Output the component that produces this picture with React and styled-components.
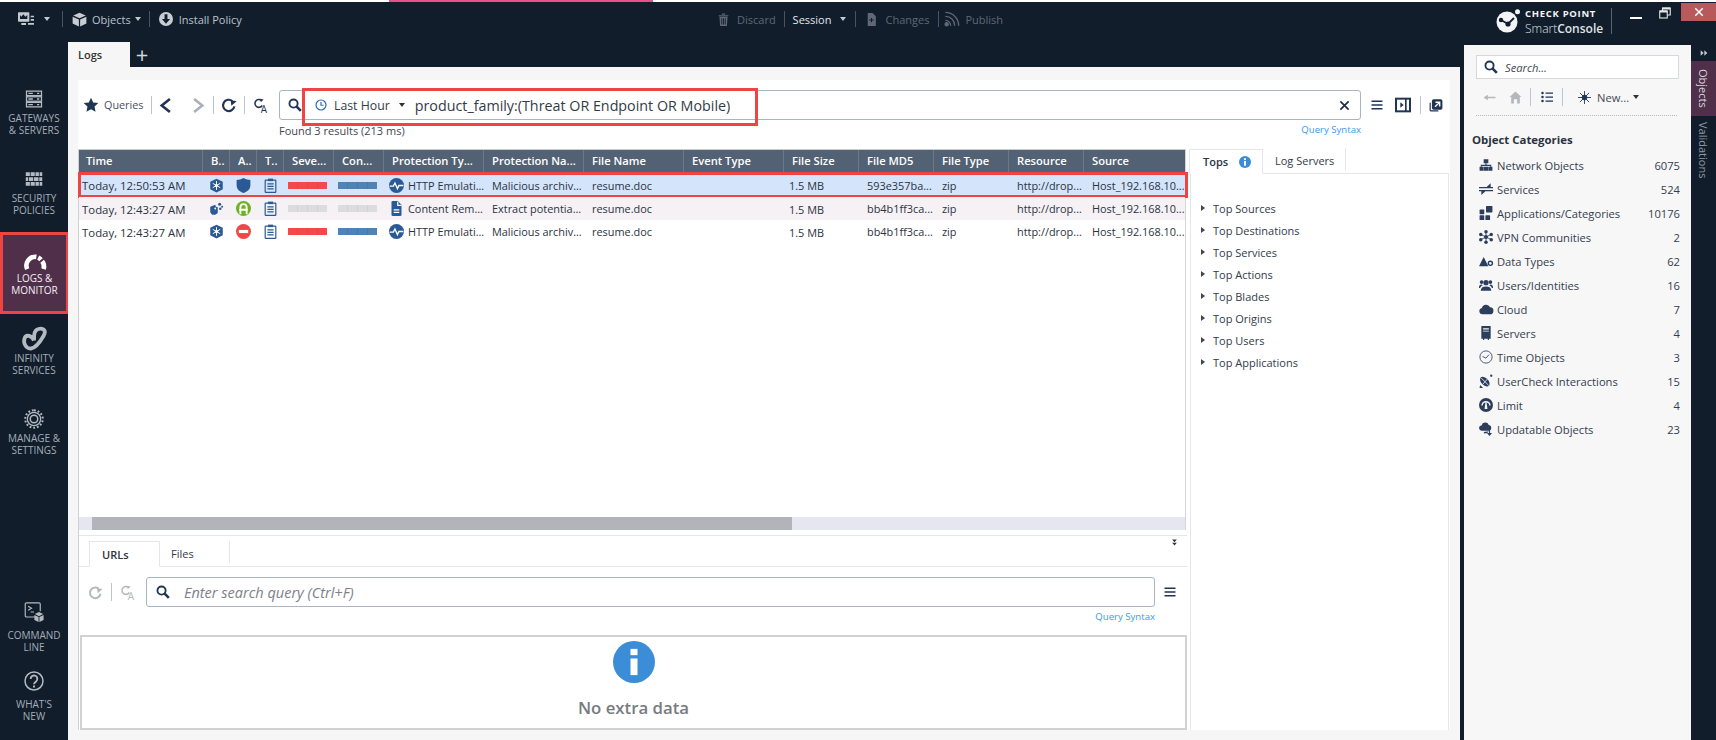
import React from 'react'
import styled, { createGlobalStyle } from 'styled-components'

const GlobalStyle = createGlobalStyle`
  html, body { margin: 0; padding: 0; background: #111d2b; }
  body { font-family: "Open Sans", "Noto Sans", sans-serif; font-size: 11px; }
  * { box-sizing: border-box; }
`

const navy = '#2a5a96'
const ink = '#1f3553'

// icon drawings, all on a 24 box
const drawings = {
  star: <path fill="currentColor" d="M12 1l3.3 7.2 7.7.9-5.7 5.3 1.5 7.6L12 18.2 5.2 22l1.5-7.6L1 9.1l7.7-.9z" />,
  chevL: <path fill="none" stroke="currentColor" strokeWidth="4.2" d="M19 1.500L6 12l13 10.500" />,
  chevR: <path fill="none" stroke="currentColor" strokeWidth="4.2" d="M5 1.500L18 12 5 22.500" />,
  refresh: (
    <g>
      <path fill="none" stroke="currentColor" strokeWidth="3.2" d="M20 14a8.5 8.5 0 1 1-3-8" />
      <path fill="currentColor" d="M23.5 6.5L15.5 13l-1-8z" />
    </g>
  ),
  queryA: (
    <g>
      <path fill="none" stroke="currentColor" strokeWidth="2.2" d="M13 12a5.5 5.5 0 1 1-1-7" />
      <path fill="currentColor" d="M15 3.5l-4 4-1-5z" />
      <text x="11" y="23" fontSize="14" fontFamily="Open Sans" fill="currentColor">A</text>
    </g>
  ),
  search: (
    <g fill="none" stroke="currentColor">
      <circle cx="9.5" cy="9.5" r="7" strokeWidth="3.2" />
      <path strokeWidth="4.4" d="M14.5 14.5L22 22" />
    </g>
  ),
  clock: (
    <g fill="none" stroke="currentColor" strokeWidth="2.4">
      <circle cx="12" cy="12" r="10" />
      <path d="M12 6v6.5h5" />
    </g>
  ),
  close: <path fill="none" stroke="currentColor" strokeWidth="3.6" d="M3 3l18 18M21 3L3 21" />,
  menu: <path fill="none" stroke="currentColor" strokeWidth="3" d="M1 4.5h22M1 12h22M1 19.5h22" />,
  dock: (
    <g>
      <rect x="1.5" y="2.5" width="21" height="19" fill="none" stroke="currentColor" strokeWidth="3" />
      <path fill="currentColor" d="M15 3h2.5v18H15zM8 8l5 4-5 4z" />
    </g>
  ),
  popout: (
    <g fill="currentColor">
      <path d="M8 2h12a3 3 0 0 1 3 3v12a3 3 0 0 1-3 3H8a3 3 0 0 1-3-3V5a3 3 0 0 1 3-3zm3 4v2.5h4.5L9.5 14l1.8 1.8L17 10v4.5h2.5V6z" />
      <path d="M1 8h2v12a1 1 0 0 0 1 1h12v2H3a2 2 0 0 1-2-2z" />
    </g>
  ),
  info: (
    <g>
      <circle cx="12" cy="12" r="12" fill="#3a8dd6" />
      <rect x="10" y="4.5" width="4" height="3.6" fill="#fff" />
      <rect x="10" y="10" width="4" height="9.5" fill="#fff" />
    </g>
  ),
  hexSnow: (
    <g>
      <path fill={navy} d="M12 1l10 5v12l-10 5-10-5V6z" />
      <path stroke="#fff" strokeWidth="1.6" d="M12 5v14M6 8.500l12 7M18 8.500l-12 7" />
      <circle cx="12" cy="12" r="2.6" fill="#fff" />
    </g>
  ),
  scatter: (
    <g fill={navy}>
      <path d="M2 9l8-3 1 3 3 1v9l-4 3H5L2 18z" />
      <circle cx="17" cy="5" r="2.4" />
      <circle cx="21" cy="9" r="1.6" />
      <circle cx="18" cy="12.5" r="2" />
      <circle cx="10" cy="12" r="1.5" fill="#fff" />
    </g>
  ),
  shield: <path fill={navy} d="M12 0C9 2 4 3 1 3v9c0 6 5 10 11 12 6-2 11-6 11-12V3c-3 0-8-1-11-3z" />,
  road: (
    <g>
      <circle cx="12" cy="12" r="12" fill="#6bb31f" />
      <path fill="none" stroke="#fff" strokeWidth="3" d="M7 21V10a5 5 0 0 1 10 0v11M5 14h14" />
    </g>
  ),
  block: (
    <g>
      <circle cx="12" cy="12" r="12" fill="#ef4747" />
      <rect x="4.5" y="9.5" width="15" height="5" fill="#fff" />
    </g>
  ),
  clipboard: (
    <g fill="none" stroke={navy} strokeWidth="1.9">
      <rect x="3.500" y="3.500" width="17" height="19.5" rx="1" />
      <path d="M7 9.5h10M7 13.5h10M7 17.5h10" />
      <rect x="8" y="1" width="8" height="4" fill={navy} stroke="none" />
    </g>
  ),
  pulse: (
    <g>
      <circle cx="12" cy="12" r="12" fill={navy} />
      <path fill="none" stroke="#fff" strokeWidth="2.2" d="M1 13h6l2.5-5 4 9 2.5-5h7" />
    </g>
  ),
  doc: (
    <g>
      <path fill={navy} d="M6 0h8l6 6v16a2 2 0 0 1-2 2H6a2 2 0 0 1-2-2V2a2 2 0 0 1 2-2z" />
      <path stroke="#fff" strokeWidth="2" d="M7.500 14h9M7.500 18h9M14 1v6h6" fill="none" />
    </g>
  ),
  // sidebar
  servers: (
    <g fill="none" stroke="currentColor" strokeWidth="1.7">
      <rect x="2" y="1.5" width="20" height="6" />
      <rect x="2" y="9" width="20" height="6" />
      <rect x="2" y="16.5" width="20" height="6" />
      <path d="M4.5 4.5h6M4.5 12h6M4.5 19.5h6M16 4.5h3M16 12h3M16 19.5h3" />
    </g>
  ),
  wall: (
    <g fill="currentColor">
      <path d="M1 3h5.5v5H1zM7.5 3h5.5v5H7.500zM14 3h4.500v5H14zM19.500 3H23v5h-3.500z" />
      <path d="M1 9.500h3v5H1zM5 9.500h6v5H5zM12 9.500h6v5h-6zM19 9.500h4v5h-4z" />
      <path d="M1 16h5.500v5H1zM7.500 16h5.500v5H7.500zM14 16h4.500v5H14zM19.500 16H23v5h-3.500z" />
    </g>
  ),
  gauge: (
    <g fill="none" stroke="#fff" strokeWidth="5">
      <path d="M3.500 23A9.500 9.500 0 0 1 13.500 9.700" />
      <path d="M15.500 10.300A9.500 9.500 0 0 1 18.500 12.800" />
      <path d="M19.800 14.500A9.500 9.500 0 0 1 21.500 23" />
    </g>
  ),
  infinity: (
    <path fill="none" stroke="currentColor" strokeWidth="3.8" d="M12 13.500C10 8.500 4 7 2.500 11.500S4 22 9 21.500 18 15 21.500 9 21 1 16.500 2 12 8 12 13.500" />
  ),
  gear: (
    <g fill="none" stroke="currentColor">
      <circle cx="12" cy="12" r="8" strokeWidth="1.500" />
      <circle cx="12" cy="12" r="4.500" strokeWidth="1.800" />
      <path strokeWidth="2.400" strokeDasharray="2.200 2.300" d="M12 1.500a10.500 10.500 0 1 1 0 21 10.500 10.500 0 1 1 0-21" />
    </g>
  ),
  terminal: (
    <g>
      <path fill="none" stroke="currentColor" strokeWidth="1.400" d="M14 18H3a1.500 1.500 0 0 1-1.500-1.500v-14A1.500 1.500 0 0 1 3 1h15a1.500 1.500 0 0 1 1.500 1.500V11" />
      <path fill="none" stroke="currentColor" strokeWidth="1.400" d="M5 5l4 2.500L5 10M8 12h4" />
      <path fill="currentColor" d="M18 12l5 2.500-5 2.500-5-2.500zM12.500 15.500l5 2.500v6l-5-2.500zM23.500 15.500l-5 2.500v6l5-2.500z" />
    </g>
  ),
  help: (
    <g fill="none" stroke="currentColor" strokeWidth="1.800">
      <circle cx="12" cy="12" r="10.800" />
      <path strokeWidth="2.200" d="M8 9.500a4 4 0 1 1 6.500 3c-1.500 1.200-2.500 1.800-2.500 3.500" />
      <path strokeWidth="2.400" d="M12 17.500v2.400" />
    </g>
  ),
  // top bar
  crown: (
    <g fill="currentColor">
      <path d="M1 2h15a1 1 0 0 1 1 1v12a1 1 0 0 1-1 1H1a1 1 0 0 1-1-1V3a1 1 0 0 1 1-1zm2 10h11V6l-3 2.500-3-3.500-3 3.500L3 6z" fillRule="evenodd" />
      <path d="M5 18h7v3H5zM19 7h5v2.500h-5zM19 12h5v2.500h-5zM15 18h9v2.500h-9z" />
    </g>
  ),
  cube: (
    <g fill="currentColor">
      <path d="M12 1l10 4.500-10 4.500L2 5.500z" />
      <path d="M1 7.500l10 4.500v11L1 18.500zM23 7.500L13 12v11l10-4.500z" />
    </g>
  ),
  install: (
    <g>
      <circle cx="12" cy="12" r="12" fill="currentColor" />
      <path fill="#111d2b" d="M9.500 4h5v8H19l-7 8-7-8h4.500z" />
    </g>
  ),
  trash: (
    <g fill="currentColor">
      <path d="M3 4h18v2H3zM9 1h6v2H9zM4.500 7h15l-1.200 17H5.700zm3.500 2.500V21h1.600V9.500zm3.200 0V21h1.600V9.500zm3.200 0V21H16V9.500z" fillRule="evenodd" />
    </g>
  ),
  changes: (
    <g fill="currentColor">
      <path d="M5 0h9l6 6v18H5zm6 9v3H8v2h3v3h2v-3h3v-2h-3V9z" fillRule="evenodd" />
    </g>
  ),
  rss: (
    <g fill="none" stroke="currentColor" strokeWidth="2">
      <path d="M2 2c11 0 20 9 20 20M2 8c8 0 14 6 14 14M2 14c4.500 0 8 3.500 8 8" />
      <circle cx="4" cy="20" r="2.400" fill="currentColor" />
    </g>
  ),
  restore: (
    <g fill="none" stroke="currentColor" strokeWidth="2.200">
      <rect x="1.500" y="8" width="15" height="14" />
      <path d="M7 8V2h15.500v14H16.500" />
      <path strokeWidth="3.600" d="M1.500 9h15M7 3h15.500" />
    </g>
  ),
  dblDown: <path fill="currentColor" d="M4 2h16l-8 9zM4 13h16l-8 9z" />,
  dblRight: <path fill="currentColor" d="M2 4v16l9-8zM13 4v16l9-8z" />,
  // object panel
  home: (
    <g fill="currentColor">
      <path d="M12 1l11 10h-3v12h-5v-8H9v8H4V11H1z" />
    </g>
  ),
  back: <path fill="currentColor" d="M1 12l8-5v3.500h14v3H9V17z" />,
  list: (
    <g fill="currentColor">
      <circle cx="3" cy="4" r="2.500" />
      <circle cx="3" cy="12" r="2.500" />
      <circle cx="3" cy="20" r="2.500" />
      <path d="M9 3h15v2.400H9zM9 11h15v2.400H9zM9 19h15v2.400H9z" />
    </g>
  ),
  burst: (
    <g stroke="currentColor" strokeWidth="1.600">
      <path d="M12 0v24M0 12h24M3.500 3.500l17 17M20.500 3.500l-17 17" />
      <circle cx="12" cy="12" r="4.500" fill="currentColor" />
    </g>
  ),
  tree: (
    <g fill="currentColor">
      <path d="M8 2h8v7H8zM1 15h7v7H1zM16 15h7v7h-7zM8.500 15h7v7h-7z" />
      <path d="M11 9h2v2.500h8V15h-2v-1.500H5V15H3v-3.500h8z" />
    </g>
  ),
  swap: (
    <g fill="currentColor">
      <path d="M0 8.500h24v2.200H0zM13 8.500l7-6.500v6.500zM0 13.500h24v2.200H0zM4 15.700v6.500l7-6.500z" />
    </g>
  ),
  apps: (
    <g fill="currentColor">
      <rect x="1" y="6" width="8" height="8" rx="1" />
      <rect x="1" y="16" width="8" height="8" rx="1" />
      <rect x="11" y="16" width="8" height="8" rx="1" />
      <rect x="12" y="0" width="11" height="11" rx="1" />
    </g>
  ),
  vpn: (
    <g fill="currentColor">
      <circle cx="12" cy="3" r="3" />
      <circle cx="12" cy="21" r="3" />
      <circle cx="3" cy="7.500" r="3" />
      <circle cx="21" cy="7.500" r="3" />
      <circle cx="3" cy="16.500" r="3" />
      <circle cx="21" cy="16.500" r="3" />
      <circle cx="12" cy="12" r="3.500" />
      <path stroke="currentColor" strokeWidth="1.400" d="M12 3v18M3 7.500l18 9M21 7.500l-18 9" />
    </g>
  ),
  dataType: (
    <g>
      <path fill="currentColor" d="M0 21L8 5l8 16z" />
      <circle cx="19.500" cy="16" r="3.500" fill="none" stroke="currentColor" strokeWidth="2.400" />
    </g>
  ),
  users: (
    <g fill="currentColor">
      <circle cx="12" cy="8" r="4.500" />
      <path d="M3 22c0-5 3-7.500 9-7.500s9 2.500 9 7.500z" />
      <circle cx="4.500" cy="7" r="3.200" />
      <circle cx="19.500" cy="7" r="3.200" />
      <path d="M0 16c0-3 1.500-5 4.500-5l2 1.500C4 14 2.500 15 2 17H0zM24 16c0-3-1.500-5-4.500-5l-2 1.500c2.500 1.500 4 2.500 4.500 4.500h2z" />
    </g>
  ),
  cloud: <path fill="currentColor" d="M6 21a5.500 5.500 0 0 1-1-10.900A7.500 7.500 0 0 1 19 9a6 6 0 0 1-.5 12z" />,
  server: (
    <g fill="currentColor">
      <path d="M4 0h16v22h-3v2h-2v-2H9v2H7v-2H4zm3 4v2h10V4zm0 4v1.500h10V8z" fillRule="evenodd" />
    </g>
  ),
  timeObj: (
    <g fill="none" stroke="currentColor" strokeWidth="1.400">
      <circle cx="12" cy="12" r="10.500" />
      <path d="M6 11l6 3 5-6" />
    </g>
  ),
  dish: (
    <g fill="currentColor">
      <ellipse cx="10" cy="13" rx="6" ry="10" transform="rotate(-45 10 13)" />
      <path stroke="#f7f7f7" strokeWidth="1.400" d="M4 7l13 13M15 8L7 17" />
      <circle cx="21" cy="3" r="2" />
      <path d="M2 19l5 5H1z" />
    </g>
  ),
  limit: (
    <g>
      <circle cx="12" cy="12" r="12" fill="currentColor" />
      <path fill="#f7f7f7" d="M11 8h2l1.500 11h-5zM4 13a8 8 0 0 1 16 0h-2.500a5.500 5.500 0 0 0-11 0z" />
    </g>
  ),
  update: (
    <g fill="currentColor">
      <path d="M5 15a4.500 4.500 0 0 1-.6-9 6.500 6.500 0 0 1 12.400-1 5 5 0 0 1 .6 9.800L16 15z" />
      <path d="M17 13h2v6h3.500L18 24l-4.500-5H17zM8 17l9-1-3 3-5 .5z" />
    </g>
  ),
  logo: (
    <g>
      <circle cx="11" cy="13" r="10.500" fill="#f2f4f6" />
      <path stroke="#111d2b" strokeWidth="1.800" d="M5 11l7 4 6-6" fill="none" />
      <circle cx="5" cy="11" r="2.200" fill="#111d2b" />
      <circle cx="12" cy="15" r="2.600" fill="#111d2b" />
      <circle cx="21.500" cy="2.800" r="2.500" fill="#f2f4f6" />
    </g>
  ),
}

const Glyph = styled.svg`
  display: block;
  flex: none;
  overflow: visible;
  color: ${p => p.$c || 'currentColor'};
  margin-left: ${p => p.$ml || 0}px;
`

const Ic = ({ name, w = 14, h, c, ml }) => (
  <Glyph width={w} height={h || w} viewBox="0 0 24 24" preserveAspectRatio="xMidYMid meet" $c={c} $ml={ml}>
    {drawings[name]}
  </Glyph>
)

const Page = styled.div`
  width: 1716px;
  height: 740px;
  display: flex;
  flex-direction: column;
  overflow: hidden;
  background: #111d2b;
`

const Strip = styled.div`
  height: 2px;
  flex: none;
  background: linear-gradient(to right, #fff 389px, #e8528c 389px, #e8528c 653px, #fff 653px);
`

const TopBar = styled.header`
  height: 40px;
  flex: none;
  display: flex;
  color: #c3c9d0;
`

const BarGroup = styled.div`
  display: flex;
  align-items: center;
  height: 34px;
  padding-left: ${p => p.$pad || 0}px;
  width: ${p => (p.$w ? `${p.$w}px` : 'auto')};
`

const BarLabel = styled.span`
  font-size: 11px;
  white-space: nowrap;
  margin-left: ${p => p.$ml || 0}px;
  color: ${p => (p.$off ? '#5f6874' : p.$bright ? '#e3e6ea' : '#bcc3cb')};
`

const Caret = styled.i`
  flex: none;
  width: 0;
  height: 0;
  margin-left: ${p => p.$ml || 0}px;
  border-left: 3.5px solid transparent;
  border-right: 3.5px solid transparent;
  border-top: 4px solid ${p => p.$c || '#c3c9d0'};
`

const BarSep = styled.i`
  flex: none;
  width: 1px;
  height: ${p => p.$h || 16}px;
  margin-left: ${p => p.$ml || 0}px;
  background: ${p => p.$c || '#4a5460'};
`

const BrandBox = styled.div`
  margin-left: auto;
  display: flex;
  align-items: flex-start;
`

const Brand = styled.div`
  display: flex;
  align-items: center;
  height: 36px;
  padding-top: 2px;
  color: #f2f4f6;
`

const BrandText = styled.div`
  margin-left: 5px;
  width: 80px;
  display: flex;
  flex-direction: column;
  line-height: 15px;
`

const BrandTop = styled.span`
  font-size: 9.5px;
  font-weight: 700;
  letter-spacing: 0.7px;
  white-space: nowrap;
`

const BrandName = styled.span`
  font-size: 12px;
  font-weight: 300;
  color: #dfe3e7;
  b {
    font-weight: 600;
  }
`

const WinControls = styled.div`
  display: flex;
  align-items: flex-start;
`

const MinBtn = styled.i`
  width: 12px;
  height: 2px;
  margin: 15px 0 0 18px;
  background: #fff;
`

const RestoreBtn = styled.div`
  margin: 5px 0 0 17px;
  color: #e6e8ea;
`

const CloseBtn = styled.div`
  width: 35px;
  height: 18px;
  margin: 1px 0 0 10px;
  background: #b85a5c;
  color: #fff;
  display: flex;
  align-items: center;
  justify-content: center;
`

const Body = styled.div`
  flex: 1;
  display: flex;
  min-height: 0;
`

const Sidebar = styled.nav`
  width: 68px;
  flex: none;
  display: flex;
  flex-direction: column;
  padding: 32px 0 15px;
`

const SideItem = styled.div`
  height: ${p => (p.$active ? 82 : p.$compact ? 69 : 80)}px;
  margin-top: ${p => (p.$active ? -2 : 0)}px;
  padding-top: ${p => (p.$active ? 15 : 13)}px;
  width: ${p => (p.$active ? 69 : 68)}px;
  display: flex;
  flex-direction: column;
  align-items: center;
  background: ${p => (p.$active ? '#4f2f49' : 'transparent')};
  outline: ${p => (p.$active ? '3px solid #ee4444' : 'none')};
  outline-offset: -3px;
  color: ${p => (p.$active ? '#fff' : '#b4bac2')};
`

const SideSlot = styled.div`
  height: 24px;
  display: flex;
  align-items: center;
`

const SideLabel = styled.div`
  margin-top: ${p => (p.$compact ? 5 : 1)}px;
  font-size: 10px;
  line-height: 12px;
  text-align: center;
  white-space: pre-line;
  color: ${p => (p.$active ? '#f4f0f4' : '#a4adb7')};
`

const SideBottom = styled.div`
  margin-top: auto;
`

const Main = styled.main`
  width: 1392px;
  flex: none;
  display: flex;
  flex-direction: column;
`

const TabRow = styled.div`
  height: 25px;
  flex: none;
  display: flex;
  align-items: center;
`

const LogsTab = styled.div`
  width: 62px;
  height: 25px;
  padding-left: 10px;
  background: #f6f6f6;
  color: #333;
  font-size: 11px;
  font-weight: 600;
  line-height: 25px;
`

const PlusBtn = styled.div`
  margin-left: 6px;
  font-size: 22px;
  line-height: 25px;
  width: 12px;
  color: #d4d8dc;
  display: flex;
  justify-content: center;
`

const Sheet = styled.div`
  flex: 1;
  min-height: 0;
  background: #f6f6f6;
  padding: 13px 10px 10px;
`

const Card = styled.div`
  height: 100%;
  background: #fff;
  display: flex;
  flex-direction: column;
`

const Toolbar = styled.div`
  height: 69px;
  flex: none;
  padding-top: 10px;
`

const ToolRow = styled.div`
  display: flex;
  align-items: center;
  height: 30px;
  padding-left: 5px;
  color: ${ink};
`

const ToolText = styled.span`
  width: 47px;
  margin-left: 5px;
  padding-bottom: 1px;
  font-size: 10.8px;
  color: #47505e;
`

const ToolSep = styled.i`
  flex: none;
  width: 1px;
  height: 18px;
  margin-left: ${p => p.$ml || 0}px;
  background: #bcc5ce;
`

const QueryInput = styled.div`
  width: 1082px;
  height: 30px;
  margin-left: 9px;
  flex: none;
  display: flex;
  align-items: flex-start;
  border: 1px solid #aab5c2;
  border-radius: 3px;
  padding-left: 8px;
`

const InputIconSlot = styled.div`
  height: 28px;
  display: flex;
  align-items: center;
`

const QueryFrame = styled.div`
  width: 456px;
  height: 38px;
  flex: none;
  margin: -3px 0 0 0;
  border: 3px solid #ee4444;
  display: flex;
  align-items: center;
  padding: 0 0 4px 10px;
`

const RangeLabel = styled.span`
  margin-left: 7px;
  font-size: 12.3px;
  color: #333b48;
`

const QueryText = styled.span`
  margin-left: 10px;
  font-size: 14.3px;
  color: #333b48;
  white-space: nowrap;
`

const ClearSlot = styled.div`
  margin-left: auto;
  margin-right: 10px;
  height: 28px;
  display: flex;
  align-items: center;
`

const StatusRow = styled.div`
  width: 1082px;
  height: 18px;
  margin: 1px 0 0 201px;
  display: flex;
  align-items: center;
  justify-content: space-between;
  font-size: 11px;
  color: #3f4652;
`

const SyntaxLink = styled.a`
  font-size: 9.6px;
  color: #3a9af0;
  white-space: nowrap;
  position: relative;
  top: ${p => p.$up || 0}px;
`

const Split = styled.div`
  flex: 1;
  min-height: 0;
  display: flex;
`

const LeftCol = styled.div`
  width: 1109px;
  flex: none;
  display: flex;
  flex-direction: column;
  border-left: 1px solid #cfd1d4;
`

const Grid = styled.section`
  height: 381px;
  flex: none;
  width: 1107px;
  display: flex;
  flex-direction: column;
  border-top: 1px solid #c8ccd0;
  border-right: 1px solid #d4d6d9;
`

const columns = '124px 27px 27px 27px 50px 50px 100px 100px 100px 100px 75px 75px 75px 75px 1fr'

const HeadRow = styled.div`
  height: 23px;
  flex: none;
  display: grid;
  grid-template-columns: ${columns};
  background: #526173;
`

const HeadCell = styled.div`
  border-right: 1px solid #6c7988;
  padding-left: 8px;
  color: #fff;
  font-weight: 600;
  font-size: 11.2px;
  line-height: 22px;
  white-space: nowrap;
  &:first-child {
    padding-left: 7px;
  }
  &:last-child {
    border-right: none;
  }
`

const Row = styled.div`
  height: ${p => (p.$selected ? 24 : 23)}px;
  display: grid;
  grid-template-columns: ${columns};
  align-items: center;
  background: ${p => (p.$selected ? '#d3e4fb' : p.$alt ? '#f5f1f5' : '#fff')};
  outline: ${p => (p.$selected ? '3px solid #ee4444' : 'none')};
  outline-offset: -2px;
  margin-right: ${p => (p.$selected ? -2 : 0)}px;
  position: relative;
`

const Cell = styled.div`
  padding-left: ${p => p.$pad ?? 8}px;
  padding-top: ${p => (p.$low ? 1 : 0)}px;
  font-size: ${p => p.$size || 10.9}px;
  color: #2b3340;
  white-space: nowrap;
  display: flex;
  align-items: center;
`

const IconCell = styled.div`
  display: flex;
  justify-content: center;
  align-items: center;
`

const ProtIcon = styled.div`
  width: 15px;
  margin-right: 4px;
  display: flex;
  justify-content: center;
`

const Meter = styled.div`
  width: 39px;
  height: 7px;
  margin-left: 4px;
  background: repeating-linear-gradient(
    to right,
    ${p => p.$c} 0,
    ${p => p.$c} 9px,
    ${p => p.$line} 9px,
    ${p => p.$line} 10px
  );
`

const RowFill = styled.div`
  flex: 1;
`

const HScroll = styled.div`
  height: 13px;
  flex: none;
  background: #e6e6f0;
  padding-left: 13px;
`

const HThumb = styled.div`
  width: 700px;
  height: 100%;
  background: #b3b3bb;
`

const Lower = styled.section`
  flex: 1;
  min-height: 0;
  margin-top: 5px;
  border-top: 1px solid #e4e6ea;
  position: relative;
`

const Collapse = styled.span`
  position: absolute;
  right: 9px;
  top: 3px;
  color: #333;
`

const LowerTabs = styled.div`
  height: 31px;
  display: flex;
  align-items: flex-end;
  padding-left: 10px;
  border-bottom: 1px solid #e4e6ea;
`

const ActiveTab = styled.div`
  width: ${p => p.$w}px;
  height: ${p => p.$h || 26}px;
  margin-bottom: -1px;
  background: #fff;
  border: 1px solid #e4e6ea;
  border-bottom: 1px solid #fff;
  display: flex;
  align-items: center;
  padding-left: ${p => p.$pad || 12}px;
  font-weight: 600;
  font-size: 11px;
  color: #2b3340;
`

const PlainTab = styled.div`
  width: ${p => p.$w}px;
  height: 22px;
  margin-bottom: 3px;
  border-right: 1px solid #e4e6ea;
  padding-left: ${p => p.$pad || 11}px;
  font-size: 11px;
  line-height: 25px;
  color: #333b48;
`

const SearchRow = styled.div`
  margin-top: 10px;
  height: 30px;
  display: flex;
  align-items: center;
  padding-left: 9px;
`

const SearchBox = styled.div`
  width: 1009px;
  height: 30px;
  flex: none;
  margin-left: 9px;
  border: 1px solid #aab5c2;
  border-radius: 3px;
  display: flex;
  align-items: center;
  padding-left: 9px;
  color: ${ink};
`

const Placeholder = styled.span`
  margin-left: 14px;
  font-size: 14.5px;
  font-style: italic;
  color: #7c8088;
`

const SyntaxRow = styled.div`
  width: 1076px;
  height: 14px;
  margin-top: 3px;
  display: flex;
  justify-content: flex-end;
`

const EmptyBox = styled.div`
  margin: 11px 0 0 1px;
  width: 1107px;
  height: 95px;
  border: 2px solid #d2d2d2;
  display: flex;
  flex-direction: column;
  align-items: center;
  padding-top: 4px;
`

const EmptyText = styled.div`
  margin-top: 13px;
  font-size: 16.8px;
  font-weight: 600;
  color: #777b80;
`

const TopsCol = styled.aside`
  flex: 1;
  margin-left: 2px;
  display: flex;
  flex-direction: column;
  padding-right: 1px;
`

const TopsTabs = styled.div`
  height: 25px;
  flex: none;
  display: flex;
  align-items: flex-end;
  border-bottom: 1px solid #e4e6ea;
`

const TopsPanel = styled.div`
  flex: 1;
  margin-left: 1px;
  padding-top: 23px;
  border-left: 1px solid #e4e6ea;
  border-right: 1px solid #e4e6ea;
`

const TopsItem = styled.div`
  height: 22px;
  display: flex;
  align-items: center;
  padding-left: 10px;
  font-size: 11px;
  color: #333b48;
`

const Tri = styled.i`
  width: 0;
  height: 0;
  margin-right: 8px;
  border-top: 3.5px solid transparent;
  border-bottom: 3.5px solid transparent;
  border-left: 4px solid #444;
`

const ObjectPanel = styled.aside`
  width: 227px;
  flex: none;
  margin: 3px 0 0 4px;
  background: #f7f7f7;
  padding: 10px 12px 0;
`

const ObjSearch = styled.div`
  width: 203px;
  height: 24px;
  background: #fff;
  border: 1px solid #d5d9de;
  display: flex;
  align-items: center;
  padding-left: 7px;
  color: ${ink};
`

const ObjPlaceholder = styled.span`
  margin-left: 7px;
  font-size: 11.2px;
  font-style: italic;
  color: #444a55;
`

const ObjTools = styled.div`
  height: 20px;
  margin-top: 8px;
  padding-left: 7px;
  display: flex;
  align-items: center;
`

const NewLabel = styled.span`
  margin-left: 6px;
  font-size: 11.2px;
  color: #444a55;
`

const Dotted = styled.div`
  width: 201px;
  margin-top: 8px;
  border-top: 1px dotted #b4b8bd;
`

const ObjTitle = styled.h3`
  margin: 15px 0 4px -4px;
  font-size: 11.4px;
  line-height: 18px;
  font-weight: 700;
  color: #2a3340;
`

const ObjRow = styled.div`
  height: 24px;
  display: flex;
  align-items: center;
  width: 204px;
  font-size: 11.2px;
  color: #353d50;
`

const ObjIcon = styled.div`
  width: 20px;
  display: flex;
  justify-content: center;
  color: #2c3e5c;
`

const ObjName = styled.span`
  flex: 1;
  margin-left: 1px;
  white-space: nowrap;
`

const RightTabs = styled.div`
  flex: 1;
  display: flex;
  flex-direction: column;
  align-items: stretch;
`

const Arrows = styled.div`
  height: 16px;
  margin-top: 3px;
  display: flex;
  align-items: center;
  justify-content: center;
  color: #c3c9d0;
`

const SideTab = styled.div`
  height: ${p => p.$h}px;
  writing-mode: vertical-rl;
  display: flex;
  align-items: center;
  justify-content: ${p => (p.$active ? 'center' : 'flex-start')};
  background: ${p => (p.$active ? '#4f2f49' : 'transparent')};
  color: ${p => (p.$active ? '#d5d8dc' : '#8d98a5')};
  font-size: 11px;
  padding-top: ${p => (p.$active ? 0 : 6)}px;
`

const sideNav = [
  { icon: 'servers', w: 18, label: 'GATEWAYS\n& SERVERS' },
  { icon: 'wall', w: 18, label: 'SECURITY\nPOLICIES' },
  { icon: 'gauge', w: 22, label: 'LOGS &\nMONITOR', active: true },
  { icon: 'infinity', w: 24, label: 'INFINITY\nSERVICES' },
  { icon: 'gear', w: 20, label: 'MANAGE &\nSETTINGS' },
]

const sideBottom = [
  { icon: 'terminal', w: 20, label: 'COMMAND\nLINE' },
  { icon: 'help', w: 20, label: "WHAT'S\nNEW" },
]

const headers = [
  'Time', 'B..', 'A..', 'T..', 'Seve...', 'Con...', 'Protection Ty...', 'Protection Na...',
  'File Name', 'Event Type', 'File Size', 'File MD5', 'File Type', 'Resource', 'Source',
]

const rows = [
  { time: 'Today, 12:50:53 AM', blade: 'hexSnow', action: 'shield', live: true, prot: 'pulse', type: 'HTTP Emulati...', name: 'Malicious archiv...', md5: '593e357ba...', selected: true },
  { time: 'Today, 12:43:27 AM', blade: 'scatter', action: 'road', live: false, prot: 'doc', type: 'Content Rem...', name: 'Extract potentia...', md5: 'bb4b1ff3ca...', alt: true },
  { time: 'Today, 12:43:27 AM', blade: 'hexSnow', action: 'block', live: true, prot: 'pulse', type: 'HTTP Emulati...', name: 'Malicious archiv...', md5: 'bb4b1ff3ca...' },
]

const tops = ['Top Sources', 'Top Destinations', 'Top Services', 'Top Actions', 'Top Blades', 'Top Origins', 'Top Users', 'Top Applications']

const categories = [
  ['tree', 'Network Objects', 6075],
  ['swap', 'Services', 524],
  ['apps', 'Applications/Categories', 10176],
  ['vpn', 'VPN Communities', 2],
  ['dataType', 'Data Types', 62],
  ['users', 'Users/Identities', 16],
  ['cloud', 'Cloud', 7],
  ['server', 'Servers', 4],
  ['timeObj', 'Time Objects', 3],
  ['dish', 'UserCheck Interactions', 15],
  ['limit', 'Limit', 4],
  ['update', 'Updatable Objects', 23],
]

function LogRow({ row }) {
  return (
    <Row $selected={row.selected} $alt={row.alt}>
      <Cell $pad={3} $low $size={11.4}>{row.time}</Cell>
      <IconCell><Ic name={row.blade} w={15} /></IconCell>
      <IconCell><Ic name={row.action} w={15} /></IconCell>
      <IconCell><Ic name="clipboard" w={15} /></IconCell>
      <Cell $pad={0}>
        {row.live ? <Meter $c="#f4484a" $line="#e64547" /> : <Meter $c="#dcdbde" $line="#d2d1d5" />}
      </Cell>
      <Cell $pad={0}>
        {row.live ? <Meter $c="#4f83b5" $line="#4879a8" /> : <Meter $c="#dcdbde" $line="#d2d1d5" />}
      </Cell>
      <Cell $pad={5}>
        <ProtIcon><Ic name={row.prot} w={15} /></ProtIcon>
        {row.type}
      </Cell>
      <Cell>{row.name}</Cell>
      <Cell>resume.doc</Cell>
      <Cell />
      <Cell $pad={5} $low>1.5 MB</Cell>
      <Cell>{row.md5}</Cell>
      <Cell>zip</Cell>
      <Cell>http://drop...</Cell>
      <Cell>Host_192.168.10...</Cell>
    </Row>
  )
}

export default function App() {
  return (
    <Page>
      <GlobalStyle />
      <Strip />
      <TopBar>
        <BarGroup $w={717} $pad={18}>
          <Ic name="crown" w={16} />
          <Caret $ml={10} />
          <BarSep $ml={12} />
          <Ic name="cube" w={15} ml={9} c="#c8cdd3" />
          <BarLabel $ml={5}>Objects</BarLabel>
          <Caret $ml={4} />
          <BarSep $ml={8} />
          <Ic name="install" w={14} ml={9} c="#c8cdd3" />
          <BarLabel $ml={6}>Install Policy</BarLabel>
        </BarGroup>
        <BarGroup>
          <Ic name="trash" w={13} h={15} c="#5f6874" />
          <BarLabel $off $ml={7}>Discard</BarLabel>
          <BarSep $ml={8} />
          <BarLabel $bright $ml={8}>Session</BarLabel>
          <Caret $ml={9} />
          <BarSep $ml={9} />
          <Ic name="changes" w={13} h={15} ml={9} c="#5f6874" />
          <BarLabel $off $ml={7}>Changes</BarLabel>
          <BarSep $ml={9} />
          <Ic name="rss" w={16} ml={5} c="#5f6874" />
          <BarLabel $off $ml={5}>Publish</BarLabel>
        </BarGroup>
        <BrandBox>
          <Brand>
            <Ic name="logo" w={24} />
            <BrandText>
              <BrandTop>CHECK POINT</BrandTop>
              <BrandName>Smart<b>Console</b></BrandName>
            </BrandText>
            <BarSep $h={26} $ml={6} $c="#5a6572" />
          </Brand>
          <WinControls>
            <MinBtn />
            <RestoreBtn><Ic name="restore" w={12} /></RestoreBtn>
            <CloseBtn><Ic name="close" w={10} /></CloseBtn>
          </WinControls>
        </BrandBox>
      </TopBar>
      <Body>
        <Sidebar>
          {sideNav.map(item => (
            <SideItem key={item.label} $active={item.active}>
              <SideSlot><Ic name={item.icon} w={item.w} /></SideSlot>
              <SideLabel $active={item.active}>{item.label}</SideLabel>
            </SideItem>
          ))}
          <SideBottom>
            {sideBottom.map(item => (
              <SideItem key={item.label} $compact>
                <SideSlot><Ic name={item.icon} w={item.w} /></SideSlot>
                <SideLabel $compact>{item.label}</SideLabel>
              </SideItem>
            ))}
          </SideBottom>
        </Sidebar>
        <Main>
          <TabRow>
            <LogsTab>Logs</LogsTab>
            <PlusBtn>+</PlusBtn>
          </TabRow>
          <Sheet>
            <Card>
              <Toolbar>
                <ToolRow>
                  <Ic name="star" w={16} />
                  <ToolText>Queries</ToolText>
                  <ToolSep />
                  <Ic name="chevL" w={15} ml={6} />
                  <Ic name="chevR" w={15} ml={18} c="#aab0b7" />
                  <ToolSep $ml={7} />
                  <Ic name="refresh" w={16} ml={7} />
                  <ToolSep $ml={7} />
                  <Ic name="queryA" w={17} ml={8} />
                  <QueryInput>
                    <InputIconSlot><Ic name="search" w={14} /></InputIconSlot>
                    <QueryFrame>
                      <Ic name="clock" w={12} c="#2a6fb5" />
                      <RangeLabel>Last Hour</RangeLabel>
                      <Caret $ml={9} $c="#333" />
                      <QueryText>product_family:(Threat OR Endpoint OR Mobile)</QueryText>
                    </QueryFrame>
                    <ClearSlot><Ic name="close" w={11} c="#1f2c3f" /></ClearSlot>
                  </QueryInput>
                  <Ic name="menu" w={12} ml={10} />
                  <Ic name="dock" w={16} ml={12} />
                  <ToolSep $ml={9} />
                  <Ic name="popout" w={14} ml={8} />
                </ToolRow>
                <StatusRow>
                  <span>Found 3 results (213 ms)</span>
                  <SyntaxLink $up={-1}>Query Syntax</SyntaxLink>
                </StatusRow>
              </Toolbar>
              <Split>
                <LeftCol>
                  <Grid>
                    <HeadRow>
                      {headers.map(h => <HeadCell key={h}>{h}</HeadCell>)}
                    </HeadRow>
                    {rows.map((row, i) => <LogRow key={i} row={row} />)}
                    <RowFill />
                    <HScroll><HThumb /></HScroll>
                  </Grid>
                  <Lower>
                    <Collapse><Ic name="dblDown" w={7} /></Collapse>
                    <LowerTabs>
                      <ActiveTab $w={71}>URLs</ActiveTab>
                      <PlainTab $w={70}>Files</PlainTab>
                    </LowerTabs>
                    <SearchRow>
                      <Ic name="refresh" w={15} c="#b4b8bd" />
                      <ToolSep $ml={8} />
                      <Ic name="queryA" w={17} ml={8} c="#b4b8bd" />
                      <SearchBox>
                        <Ic name="search" w={14} />
                        <Placeholder>Enter search query (Ctrl+F)</Placeholder>
                      </SearchBox>
                      <Ic name="menu" w={12} ml={9} c={ink} />
                    </SearchRow>
                    <SyntaxRow><SyntaxLink>Query Syntax</SyntaxLink></SyntaxRow>
                    <EmptyBox>
                      <Ic name="info" w={42} />
                      <EmptyText>No extra data</EmptyText>
                    </EmptyBox>
                  </Lower>
                </LeftCol>
                <TopsCol>
                  <TopsTabs>
                    <ActiveTab $w={74} $h={25} $pad={13}>
                      Tops
                      <Ic name="info" w={12} ml={11} />
                    </ActiveTab>
                    <PlainTab $w={83} $pad={12}>Log Servers</PlainTab>
                  </TopsTabs>
                  <TopsPanel>
                    {tops.map(t => (
                      <TopsItem key={t}><Tri />{t}</TopsItem>
                    ))}
                  </TopsPanel>
                </TopsCol>
              </Split>
            </Card>
          </Sheet>
        </Main>
        <ObjectPanel>
          <ObjSearch>
            <Ic name="search" w={14} />
            <ObjPlaceholder>Search...</ObjPlaceholder>
          </ObjSearch>
          <ObjTools>
            <Ic name="back" w={13} c="#b4b8bd" />
            <Ic name="home" w={13} ml={13} c="#b4b8bd" />
            <ToolSep $ml={8} />
            <Ic name="list" w={12} ml={10} c={ink} />
            <ToolSep $ml={9} />
            <Ic name="burst" w={13} ml={15} c={ink} />
            <NewLabel>New...</NewLabel>
            <Caret $ml={4} $c="#333" />
          </ObjTools>
          <Dotted />
          <ObjTitle>Object Categories</ObjTitle>
          {categories.map(([icon, name, count]) => (
            <ObjRow key={name}>
              <ObjIcon><Ic name={icon} w={14} /></ObjIcon>
              <ObjName>{name}</ObjName>
              <span>{count}</span>
            </ObjRow>
          ))}
        </ObjectPanel>
        <RightTabs>
          <Arrows><Ic name="dblRight" w={8} /></Arrows>
          <SideTab $active $h={55}>Objects</SideTab>
          <SideTab $h={70}>Validations</SideTab>
        </RightTabs>
      </Body>
    </Page>
  )
}
